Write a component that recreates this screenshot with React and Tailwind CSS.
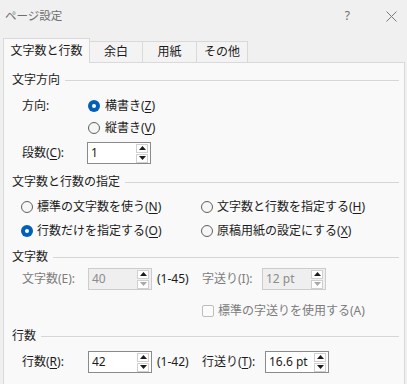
import React from "react";

const FONT = { fontFamily: '"Noto Sans", "Noto Sans CJK JP", sans-serif' };

function U({ children }) {
  return <span className="underline underline-offset-2">{children}</span>;
}

function Radio({ checked }) {
  if (checked) {
    return (
      <span className="flex h-[12px] w-[12px] shrink-0 items-center justify-center rounded-full bg-[#005fb8]">
        <span className="h-[4px] w-[4px] rounded-full bg-white" />
      </span>
    );
  }
  return <span className="h-[12px] w-[12px] shrink-0 rounded-full border border-[#5f5f5f] bg-[#f6f6f6]" />;
}

function Tri({ down, color }) {
  return (
    <svg width="7" height="4" viewBox="0 0 7 4">
      {down ? <polygon points="0,0 7,0 3.5,4" fill={color} /> : <polygon points="0,4 7,4 3.5,0" fill={color} />}
    </svg>
  );
}

function Spin({ value, disabled, width = "w-[64px]" }) {
  return (
    <div
      className={`flex h-[22px] ${width} shrink-0 items-center border ${
        disabled ? "border-[#cccccc] bg-[#efefef] text-[#8c8c8c]" : "border-[#8a8a8a] bg-white text-[#1b1b1b]"
      }`}
    >
      <span className="pl-[3px] leading-none">{value}</span>
      <div className="ml-auto mr-[2px] flex flex-col gap-[1px]">
        <div className="flex h-[9px] w-[12px] items-center justify-center border border-[#d0d0d0] bg-white">
          <Tri color="#1b1b1b" />
        </div>
        <div className="flex h-[9px] w-[12px] items-center justify-center border border-[#d0d0d0] bg-white">
          <Tri down color={disabled ? "#a8a8a8" : "#1b1b1b"} />
        </div>
      </div>
    </div>
  );
}

function Header({ children, className = "" }) {
  return (
    <div className={`flex h-[20px] items-center pl-[8px] pr-[5px] ${className}`}>
      <span>{children}</span>
      <div className="ml-[5px] h-px flex-1 bg-[#d6d6d6]" />
    </div>
  );
}

export default function App() {
  return (
    <div className="h-[384px] w-[407px] overflow-hidden bg-[#f0f0f0] text-[12px] text-[#1b1b1b]" style={FONT}>
      {/* Title bar */}
      <div className="flex h-[38px] items-start pt-[7px] text-[#6e6e6e]">
        <span className="pl-[5px] text-[11.5px]">ページ設定</span>
        <span className="ml-auto text-[12px]">?</span>
        <span className="ml-[36px] mr-[10px] mt-[4px]">
          <svg width="11" height="11" viewBox="0 0 11 11">
            <path d="M0.5 0.5 L10.5 10.5 M10.5 0.5 L0.5 10.5" stroke="#7a7a7a" strokeWidth="1" />
          </svg>
        </span>
      </div>

      {/* Tabs */}
      <div className="relative z-10 ml-[3px] flex items-end">
        <div className="-mb-px flex h-[25px] w-[87px] items-center justify-center border border-b-0 border-[#d9d9d9] bg-[#f9f9f9] pb-[1px]">
          文字数と行数
        </div>
        <div className="flex h-[21px] w-[53px] items-center justify-center border border-l-0 border-b-0 border-[#d9d9d9] bg-[#f3f3f3]">
          余白
        </div>
        <div className="flex h-[21px] w-[54px] items-center justify-center border border-l-0 border-b-0 border-[#d9d9d9] bg-[#f3f3f3]">
          用紙
        </div>
        <div className="flex h-[21px] w-[51px] items-center justify-center border border-l-0 border-b-0 border-[#d9d9d9] bg-[#f3f3f3]">
          その他
        </div>
      </div>

      {/* Panel */}
      <div className="ml-[3px] h-[400px] w-[402px] border border-[#d9d9d9] bg-[#f9f9f9] pt-[7px]">
        <Header>文字方向</Header>

        <div className="mt-[5px] flex h-[22px] items-center pl-[18px]">
          <span className="w-[66px]">方向:</span>
          <Radio checked />
          <span className="ml-[5px]">
            横書き(<U>Z</U>)
          </span>
        </div>
        <div className="flex h-[22px] items-center pl-[84px]">
          <Radio />
          <span className="ml-[5px]">
            縦書き(<U>V</U>)
          </span>
        </div>
        <div className="mt-[3px] flex h-[22px] items-center pl-[18px]">
          <span className="w-[65px]">
            段数(<U>C</U>):
          </span>
          <Spin value="1" />
        </div>

        <Header className="mt-[8px]">文字数と行数の指定</Header>
        <div className="mt-[4px] flex h-[22px] items-center pl-[17px]">
          <div className="flex w-[180px] items-center">
            <Radio />
            <span className="ml-[4px]">
              標準の文字数を使う(<U>N</U>)
            </span>
          </div>
          <div className="flex items-center">
            <Radio />
            <span className="ml-[4px]">
              文字数と行数を指定する(<U>H</U>)
            </span>
          </div>
        </div>
        <div className="mt-[2px] flex h-[22px] items-center pl-[17px]">
          <div className="flex w-[180px] items-center">
            <Radio checked />
            <span className="ml-[4px]">
              行数だけを指定する(<U>O</U>)
            </span>
          </div>
          <div className="flex items-center">
            <Radio />
            <span className="ml-[4px]">
              原稿用紙の設定にする(<U>X</U>)
            </span>
          </div>
        </div>

        <Header className="mt-[5px]">文字数</Header>
        <div className="mt-[1px] flex h-[22px] items-center pl-[18px]">
          <span className="w-[66px] text-[#7c7c7c]">文字数(E):</span>
          <Spin value="40" disabled />
          <span className="ml-[5px] w-[45px]">(1-45)</span>
          <span className="w-[60px] text-[#7c7c7c]">字送り(I):</span>
          <Spin value="12 pt" disabled />
        </div>
        <div className="mt-[10px] flex h-[22px] items-center pl-[198px]">
          <span className="h-[12px] w-[12px] shrink-0 rounded-[2px] border border-[#bdbdbd] bg-[#fbfbfb]" />
          <span className="ml-[4px] text-[#7c7c7c]">標準の字送りを使用する(A)</span>
        </div>

        <Header className="mt-[4px]">行数</Header>
        <div className="mt-[5px] flex h-[22px] items-center pl-[18px]">
          <span className="w-[66px]">
            行数(<U>R</U>):
          </span>
          <Spin value="42" />
          <span className="ml-[5px] w-[45px]">(1-42)</span>
          <span className="w-[63px]">
            行送り(<U>T</U>):
          </span>
          <Spin value="16.6 pt" />
        </div>
      </div>
    </div>
  );
}
